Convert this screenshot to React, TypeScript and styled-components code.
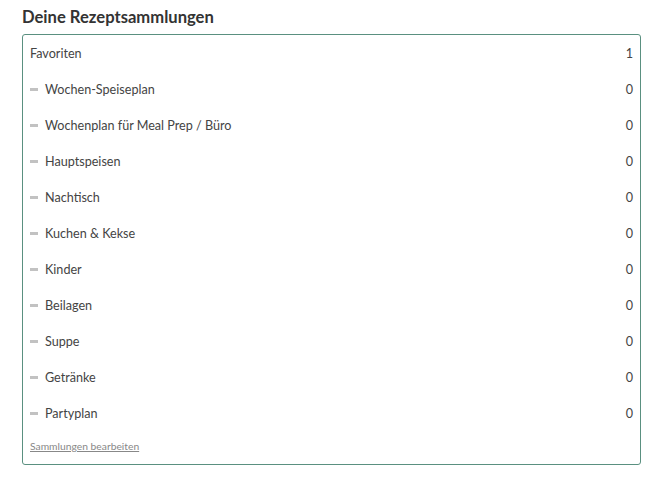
import * as React from "react";
import styled, { createGlobalStyle } from "styled-components";

const GlobalStyle = createGlobalStyle`
  body {
    margin: 0;
    background: #ffffff;
    font-family: "Lato", "Open Sans", sans-serif;
    color: #444444;
  }
`;

const Page = styled.div`
  padding: 8px 22px 0 22px;
  width: 619px;
`;

const Title = styled.h2`
  margin: 0 0 8px 0;
  font-size: 16.6px;
  line-height: 18px;
  font-weight: 700;
  color: #333333;
`;

const Box = styled.div`
  border: 1px solid #5a9080;
  border-radius: 3px;
  padding: 0 7px;
`;

const Row = styled.div`
  display: flex;
  align-items: center;
  height: 36px;
  font-size: 12.6px;
  color: #444444;
`;

const Dash = styled.span`
  display: inline-block;
  width: 8px;
  height: 3px;
  background: #c2c2c2;
  margin: 0 7px 0 0;
`;

const Name = styled.span`
  flex: 1;
`;

const Count = styled.span`
  text-align: right;
`;

const Footer = styled.div`
  padding: 7px 0 12px 0;
  line-height: 12px;
`;

const EditLink = styled.a`
  font-size: 10.3px;
  color: #888888;
  text-decoration: underline;
  cursor: pointer;
`;

const collections = [
  "Wochen-Speiseplan",
  "Wochenplan für Meal Prep / Büro",
  "Hauptspeisen",
  "Nachtisch",
  "Kuchen & Kekse",
  "Kinder",
  "Beilagen",
  "Suppe",
  "Getränke",
  "Partyplan",
];

export default function App() {
  return (
    <>
      <GlobalStyle />
      <Page>
        <Title>Deine Rezeptsammlungen</Title>
        <Box>
          <Row>
            <Name>Favoriten</Name>
            <Count>1</Count>
          </Row>
          {collections.map((c) => (
            <Row key={c}>
              <Dash />
              <Name>{c}</Name>
              <Count>0</Count>
            </Row>
          ))}
          <Footer>
            <EditLink>Sammlungen bearbeiten</EditLink>
          </Footer>
        </Box>
      </Page>
    </>
  );
}
